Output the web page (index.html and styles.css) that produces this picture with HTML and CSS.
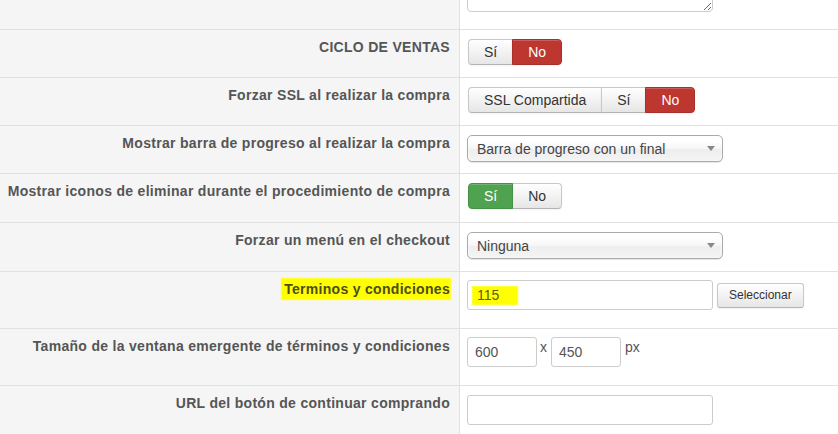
FILE: index.html
```html
<!DOCTYPE html>
<html lang="es">
<head>
    <meta charset="UTF-8">
    <title>Configuración - Pedidos y compras</title>
    <link rel="stylesheet" href="styles.css">
</head>
<body>
    <div class="config">
        <div class="row first">
            <div class="key"></div>
            <div class="field">
                <textarea class="text-area"></textarea>
            </div>
        </div>
        <div class="row">
            <div class="key"><label>CICLO DE VENTAS</label></div>
            <div class="field">
                <div class="btn-group">
                    <button class="btn">Sí</button><button class="btn btn-danger">No</button>
                </div>
            </div>
        </div>
        <div class="row">
            <div class="key"><label>Forzar SSL al realizar la compra</label></div>
            <div class="field">
                <div class="btn-group">
                    <button class="btn">SSL Compartida</button><button class="btn">Sí</button><button class="btn btn-danger">No</button>
                </div>
            </div>
        </div>
        <div class="row">
            <div class="key"><label>Mostrar barra de progreso al realizar la compra</label></div>
            <div class="field">
                <div class="chzn-single"><span>Barra de progreso con un final</span><b></b></div>
            </div>
        </div>
        <div class="row mid">
            <div class="key"><label>Mostrar iconos de eliminar durante el procedimiento de compra</label></div>
            <div class="field">
                <div class="btn-group">
                    <button class="btn btn-success">Sí</button><button class="btn">No</button>
                </div>
            </div>
        </div>
        <div class="row mid">
            <div class="key"><label>Forzar un menú en el checkout</label></div>
            <div class="field">
                <div class="chzn-single"><span>Ninguna</span><b></b></div>
            </div>
        </div>
        <div class="row tall">
            <div class="key"><label class="mark">Terminos y condiciones</label></div>
            <div class="field inline">
                <div class="input-text wide"><span class="mark">115</span></div>
                <button class="btn btn-small">Seleccionar</button>
            </div>
        </div>
        <div class="row tall">
            <div class="key"><label>Tamaño de la ventana emergente de términos y condiciones</label></div>
            <div class="field inline top">
                <input class="input-text short" type="text" value="600">
                <span class="unit x">x</span>
                <input class="input-text short" type="text" value="450">
                <span class="unit">px</span>
            </div>
        </div>
        <div class="row tall">
            <div class="key"><label>URL del botón de continuar comprando</label></div>
            <div class="field">
                <input class="input-text wide" type="text" value="">
            </div>
        </div>
    </div>
</body>
</html>
```

FILE: styles.css
```css
body {
    margin: 0;
    font-family: "Liberation Sans", Arial, sans-serif;
    font-size: 14px;
    color: #333;
    background: #fff;
}
/* la lista esta desplazada, la primera fila queda cortada arriba */
.config {
    margin-top: -42px;
}
.row {
    display: grid;
    grid-template-columns: 460px 1fr;
    min-height: 47px;
    border-bottom: 1px solid #e1e1e1;
}
.row.mid {
    min-height: 48px;
}
.row.tall {
    min-height: 56px;
}
.key {
    background: #f5f5f5;
    border-right: 1px solid #e1e1e1;
    padding: 8px 9px 0 0;
    text-align: right;
    font-weight: bold;
    color: #555;
    line-height: 18px;
    letter-spacing: 0.3px;
    white-space: nowrap;
}
.field {
    padding: 9px 7px 0;
}
.first .field {
    padding-bottom: 17px;
}
.field.inline {
    display: flex;
    align-items: center;
    align-self: start;
    padding-top: 8px;
}
.field.top {
    align-items: flex-start;
}
.text-area {
    display: block;
    width: 246px;
    height: 45px;
    box-sizing: border-box;
    border: 1px solid #ccc;
    border-radius: 4px;
    margin: 0;
}

/* botones */
.btn-group {
    display: flex;
    margin-left: 1px;
}
.btn {
    font: 14px/16px "Liberation Sans", Arial, sans-serif;
    padding: 4px 15px;
    color: #333;
    background: linear-gradient(#fff, #e6e6e6);
    border: 1px solid #c8c8c8;
    border-bottom-color: #b3b3b3;
    border-radius: 4px;
    box-shadow: inset 0 1px 0 rgba(255,255,255,.2), 0 1px 2px rgba(0,0,0,.05);
    margin: 0;
}
.btn-group .btn {
    border-radius: 0;
}
.btn-group .btn + .btn {
    margin-left: -1px;
}
.btn-group .btn:first-child {
    border-radius: 4px 0 0 4px;
}
.btn-group .btn:last-child {
    border-radius: 0 4px 4px 0;
}
.btn-danger {
    background: #bd362f;
    border-color: #a9302a;
    color: #fff;
    position: relative;
}
.btn-success {
    background: #4fa24f;
    border-color: #469146;
    color: #fff;
    position: relative;
}
.btn-small {
    font-size: 12px;
    line-height: 15px;
    padding: 4px 11px;
    border-radius: 3px;
    margin-left: 4px;
}

/* select estilo chosen */
.chzn-single {
    display: flex;
    align-items: center;
    justify-content: space-between;
    width: 256px;
    height: 27px;
    box-sizing: border-box;
    padding: 0 7px 0 9px;
    border: 1px solid #aaa;
    border-radius: 5px;
    background: linear-gradient(#fff 20%, #f6f6f6 50%, #eee 52%, #f4f4f4);
    box-shadow: inset 0 0 3px #fff, 0 1px 1px rgba(0,0,0,.1);
    color: #444;
}
.chzn-single b {
    width: 0;
    height: 0;
    border-left: 4.5px solid transparent;
    border-right: 4.5px solid transparent;
    border-top: 5px solid #888;
}

/* campos de texto */
.input-text {
    display: flex;
    align-items: center;
    height: 30px;
    box-sizing: border-box;
    padding: 0 7px;
    border: 1px solid #ccc;
    border-radius: 3px;
    background: #fff;
    font: 14px "Liberation Sans", Arial, sans-serif;
    color: #555;
    margin: 0;
}
.input-text.wide {
    width: 246px;
}
.input-text.short {
    width: 70px;
}
.unit {
    color: #555;
    line-height: 16px;
    padding-top: 2px;
    margin-left: 4px;
}
.unit.x {
    margin: 0 4px 0 3px;
}

/* resaltado amarillo */
.mark {
    background: #ffff00;
    box-shadow: 0 0 1px 1px #ffff33;
}
label.mark {
    display: inline-block;
    line-height: 16px;
    padding: 2px 0 2px 2px;
    margin-top: -1px;
    color: #4d4d1a;
}
.input-text .mark {
    line-height: 17px;
    padding: 0 18px 0 4px;
    margin-left: -2px;
    color: #5a5a20;
}
```
